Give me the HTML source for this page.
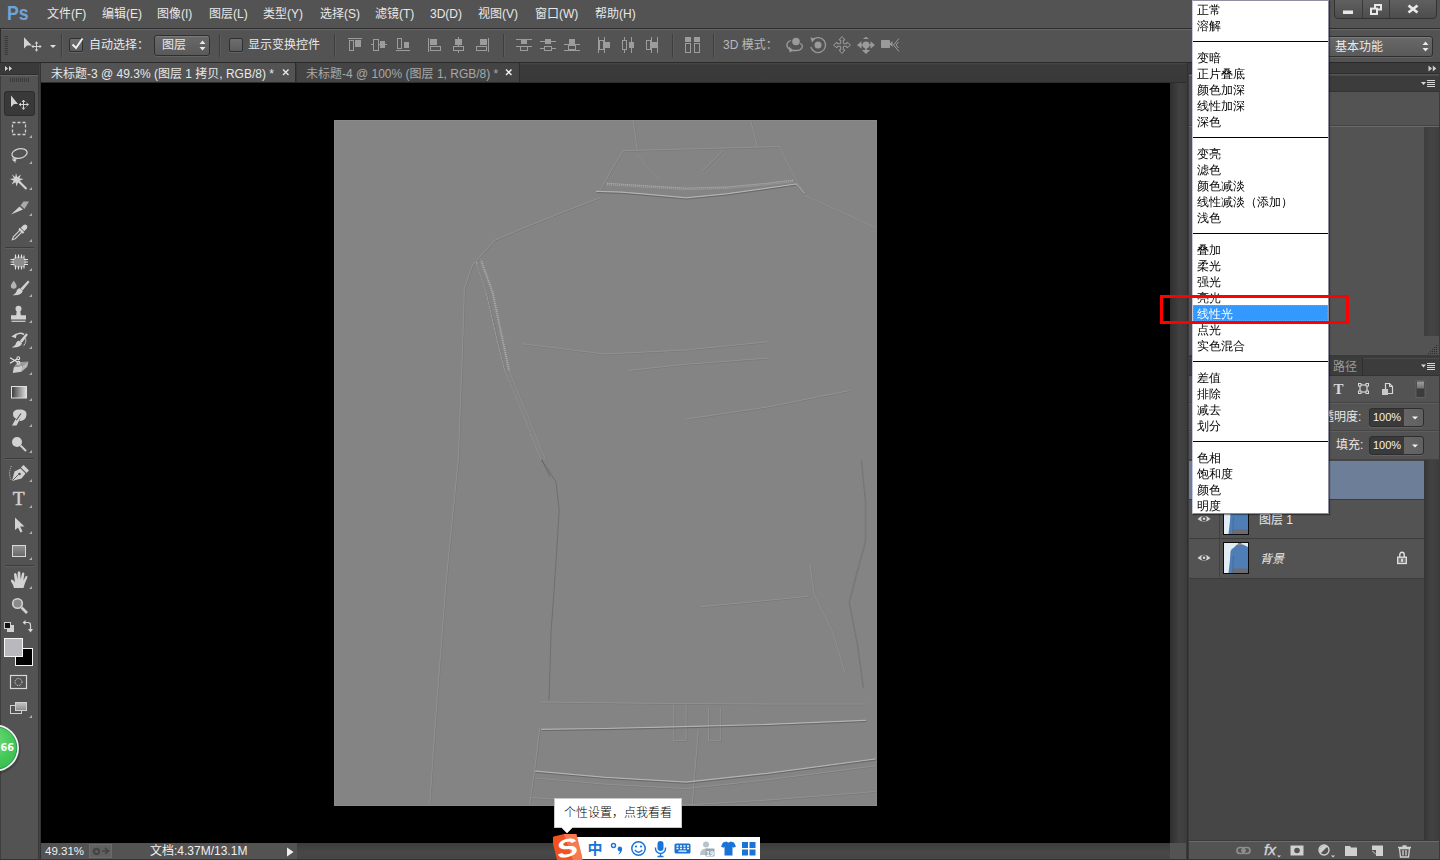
<!DOCTYPE html>
<html lang="zh-CN">
<head>
<meta charset="utf-8">
<title>Photoshop</title>
<style>
*{box-sizing:border-box;margin:0;padding:0}
html,body{width:1440px;height:860px;overflow:hidden;background:#535353}
body{position:relative;font-family:"Liberation Sans","Noto Sans CJK SC",sans-serif;font-size:12px;color:#e6e6e6}
.abs{position:absolute}
#menubar{left:0;top:0;width:1440px;height:28px;background:#535353}
#menubar .mi{position:absolute;top:5px;height:18px;line-height:18px;font-size:12px;color:#e8e8e8;white-space:nowrap}
#ps{position:absolute;left:7px;top:-1px;font-size:21px;font-weight:bold;color:#6ea4d8;line-height:28px;transform:scaleX(.84);transform-origin:0 0}
#optbar{left:0;top:28px;width:1440px;height:35px;background:#535353;border-top:1px solid #2c2c2c;border-bottom:1px solid #2a2a2a;box-shadow:inset 0 1px 0 #666}
#tabbar{left:41px;top:63px;width:1145px;height:20px;background:linear-gradient(#4a4a4a,#3b3b3b 2px,#393939);border-bottom:1px solid #2c2c2c}
.tab{position:absolute;top:0;height:19px;line-height:20px;font-size:12px;white-space:nowrap}
#canvas{left:41px;top:83px;width:1129px;height:760px;background:#000}
#photo{left:334px;top:120px;width:543px;height:686px;background:#848484;box-shadow:inset 0 0 0 1px #8a8a8a}
#vscroll{left:1170px;top:83px;width:16px;height:760px;background:linear-gradient(90deg,#2f2f2f,#424242 60%,#3d3d3d)}
#status{left:41px;top:843px;width:1145px;height:17px;background:#535353;border-bottom:1px solid #333}
#toolbar{left:0;top:63px;width:41px;height:797px;background:#535353}
#rightpanel{left:1189px;top:63px;width:251px;height:797px;background:#535353}

#winbtns{position:absolute;left:1334px;top:0;width:103px;height:19px}
.vsep{position:absolute;top:5px;width:2px;height:23px;border-left:1px solid #3e3e3e;border-right:1px solid #5c5c5c}
.ot{position:absolute;font-size:12px;line-height:16px;white-space:nowrap;color:#e8e8e8}
.sel{position:absolute;border:1px solid #2f2f2f;border-radius:3px;background:linear-gradient(#696969,#595959);box-shadow:0 1px 0 #626262, inset 0 1px 0 #7a7a7a}
.chk{position:absolute;width:14px;height:14px;border:1px solid #2f2f2f;border-radius:2px;background:linear-gradient(#6e6e6e,#5c5c5c);box-shadow:0 1px 0 #626262}

.st{font-size:11px;line-height:16px;color:#f0f0f0;white-space:nowrap}
#ime{left:553px;top:837px;width:207px;height:23px;background:linear-gradient(90deg,transparent 17px,#fff 17px)}
#tip{left:554px;top:798px;width:128px;height:30px;font-weight:300;background:#fff;border:1px solid #c8c8c8;color:#000;font-size:12px;line-height:29px;padding-left:9px;white-space:nowrap}

.lyr{left:0;width:235px;height:39px;border-bottom:1px solid #3c3c3c;background:#535353}
.eyecol{left:0;top:0;width:31px;height:38px;border-right:1px solid #414141}

#dd{left:1192px;top:0px;width:137px;height:514px;background:#fff;border:1px solid #c6c6dc;border-top-color:#9090a0;border-right-color:#8c8c9c;border-bottom-color:#8c8c9c;box-shadow:1px 1px 1px rgba(0,0,0,.4);font-family:"Liberation Sans","WenQuanYi Zen Hei",sans-serif;color:#000}
.di{height:16px;line-height:18px;font-size:12px;padding-left:4px;white-space:nowrap}
.dsep{height:16px;position:relative}
.dsep:after{content:"";position:absolute;left:0;right:0;top:8px;height:1px;background:#000}
.dsel{background:#3399ff;color:#fff;outline:1px dotted #e08a3a;outline-offset:-1px}
</style>
</head>
<body>
<div id="menubar" class="abs">
<div id="ps">Ps</div>
<div class="mi" style="left:47px">文件(F)</div>
<div class="mi" style="left:102px">编辑(E)</div>
<div class="mi" style="left:157px">图像(I)</div>
<div class="mi" style="left:209px">图层(L)</div>
<div class="mi" style="left:263px">类型(Y)</div>
<div class="mi" style="left:320px">选择(S)</div>
<div class="mi" style="left:375px">滤镜(T)</div>
<div class="mi" style="left:430px">3D(D)</div>
<div class="mi" style="left:478px">视图(V)</div>
<div class="mi" style="left:535px">窗口(W)</div>
<div class="mi" style="left:595px">帮助(H)</div>
<div id="winbtns"><svg width="103" height="19" viewBox="0 0 103 19">
<defs><linearGradient id="wb" x1="0" y1="0" x2="0" y2="1"><stop offset="0" stop-color="#616161"/><stop offset="1" stop-color="#4c4c4c"/></linearGradient></defs>
<path d="M0.5,-1V15Q0.5,18.5 4,18.5H99Q102.5,18.5 102.5,15V-1Z" fill="url(#wb)" stroke="#333"/>
<path d="M28.500,0V18M55.500,0V18" stroke="#3a3a3a"/>
<rect x="9" y="10.500" width="10" height="3.500" fill="#e8e8e8"/>
<path d="M41,9V5H47V9.500H44" fill="none" stroke="#e8e8e8" stroke-width="2"/>
<rect x="37" y="8.600" width="6" height="5.400" fill="none" stroke="#e8e8e8" stroke-width="2"/>
<path d="M74.500,5.500L83.500,12.500M83.500,5.500L74.500,12.500" stroke="#e8e8e8" stroke-width="2.800"/>
</svg></div>
</div>
<div id="optbar" class="abs">
<div class="abs" style="left:0;top:0;width:1px;height:33px;background:#2e2e2e"></div>
<svg class="abs" style="left:4px;top:7px" width="5" height="21" viewBox="0 0 5 21"><path d="M0.5,0.5H4M0.5,2.5H4M0.5,4.5H4M0.5,6.5H4M0.5,8.5H4M0.5,10.5H4M0.5,12.5H4M0.5,14.5H4M0.5,16.5H4M0.5,18.5H4" stroke="#3a3a3a"/></svg>
<svg class="abs" style="left:22px;top:8px" width="36" height="16" viewBox="0 0 36 16">
<path d="M2,0.300L2,11.600L5,8.600L9.900,8.600Z" fill="#d4d4d4"/>
<path d="M14.500,5.500V13.500M10.500,9.500H18.500" stroke="#d4d4d4" stroke-width="1" fill="none"/>
<path d="M14.500,4.300L16.300,6.500H12.700ZM14.500,14.700L16.300,12.500H12.700ZM9.300,9.500L11.500,7.700V11.300ZM19.700,9.500L17.500,7.700V11.300Z" fill="#d4d4d4"/>
<path d="M28,8H34L31,11Z" fill="#e0e0e0"/>
</svg>
<div class="vsep" style="left:61px"></div>
<div class="chk" style="left:69px;top:9px"><svg width="16" height="16" viewBox="0 0 16 16" style="position:absolute;left:-1px;top:-3px"><path d="M3.5,8.5L7,12L13.5,2.5" fill="none" stroke="#f0f0f0" stroke-width="2"/></svg></div>
<div class="ot" style="left:89px;top:8px">自动选择：</div>
<div class="sel" style="left:154px;top:6px;width:56px;height:21px"></div>
<div class="ot" style="left:162px;top:8px">图层</div>
<svg class="abs" style="left:199px;top:11px" width="7" height="11" viewBox="0 0 7 11"><path d="M0.5,4L3.5,0.5L6.5,4ZM0.5,7L3.5,10.5L6.5,7Z" fill="#e8e8e8"/></svg>
<div class="vsep" style="left:219px"></div>
<div class="chk" style="left:229px;top:9px"></div>
<div class="ot" style="left:248px;top:8px">显示变换控件</div>
<div class="vsep" style="left:334px"></div>
<div class="vsep" style="left:503px"></div>
<div class="vsep" style="left:672px"></div>
<div class="vsep" style="left:713px"></div>
<div class="ot" style="left:723px;top:8px;color:#b9b9b9">3D 模式：</div>
</div>
<svg id="optic" class="abs" style="left:0;top:0;pointer-events:none" width="1440" height="64" viewBox="0 0 1440 64">
<g fill="#9c9c9c" stroke="none">
<rect x="348" y="38" width="14" height="1"/><rect x="355" y="40" width="6" height="7"/>
<rect x="371" y="44" width="16" height="1"/><rect x="380" y="41" width="5" height="7"/>
<rect x="396" y="50" width="14" height="1"/><rect x="404" y="42" width="5" height="6"/>
<rect x="428" y="38" width="1" height="14"/><rect x="430" y="39" width="7" height="6"/>
<rect x="458" y="37" width="1" height="16"/><rect x="455" y="39" width="7" height="6"/>
<rect x="488" y="38" width="1" height="14"/><rect x="480" y="39" width="7" height="6"/>
<rect x="516" y="39" width="16" height="1"/><rect x="521" y="40" width="6" height="4"/><rect x="516" y="46" width="16" height="1"/>
<rect x="540" y="41" width="16" height="1"/><rect x="545" y="39" width="6" height="5"/><rect x="540" y="48" width="16" height="1"/>
<rect x="564" y="44" width="16" height="1"/><rect x="569" y="39" width="6" height="5"/><rect x="564" y="50" width="16" height="1"/>
<rect x="598" y="37" width="1" height="16"/><rect x="604" y="37" width="1" height="16"/><rect x="605" y="42" width="5" height="6"/>
<rect x="624" y="37" width="1" height="16"/><rect x="631" y="37" width="1" height="16"/><rect x="629" y="42" width="5" height="6"/>
<rect x="651" y="37" width="1" height="16"/><rect x="657" y="37" width="1" height="16"/><rect x="652" y="42" width="5" height="6"/>
<rect x="685" y="37" width="6" height="5"/><rect x="694" y="37" width="6" height="5"/>
</g>
<g fill="#535353" stroke="#9c9c9c" stroke-width="1">
<rect x="349.500" y="40.500" width="4" height="10"/>
<rect x="373.500" y="39.500" width="5" height="11"/>
<rect x="397.500" y="38.500" width="4" height="10"/>
<rect x="430.500" y="46.500" width="10" height="4"/>
<rect x="453.500" y="46.500" width="10" height="4"/>
<rect x="476.500" y="46.500" width="10" height="4"/>
<rect x="520.500" y="46.500" width="7" height="4"/>
<rect x="544.500" y="46.500" width="7" height="4"/>
<rect x="568.500" y="45.500" width="7" height="4"/>
<rect x="599.500" y="40.500" width="4" height="9"/>
<rect x="622.500" y="40.500" width="4" height="9"/>
<rect x="646.500" y="40.500" width="4" height="9"/>
<rect x="685.500" y="43.500" width="5" height="9"/>
<rect x="694.500" y="43.500" width="5" height="9"/>
</g>
<g fill="none" stroke="#9a9a9a" stroke-width="1.3">
<!-- 3D rotate -->
<circle cx="796" cy="41.500" r="3.800" fill="#9a9a9a" stroke="none"/>
<path d="M791,40.500C786,42 785.500,47 790,49.500M800,43.500C804,45 803,50 796,50.500H791"/>
<path d="M789,46.500L793.500,50.500L789.500,52.500Z" fill="#9a9a9a" stroke="none"/>
<!-- roll -->
<circle cx="818" cy="45" r="3.500" fill="#9a9a9a" stroke="none"/>
<path d="M813,39.500A7.500,7.500 0 1 1 810.800,47"/>
<path d="M810.500,37.500L815.500,38.500L812,42.500Z" fill="#9a9a9a" stroke="none"/>
<!-- pan -->
<path d="M842,36.500L845,40H843.300V43.700H847V42L850.500,45L847,48V46.300H843.300V50H845L842,53.500L839,50H840.700V46.300H837V48L833.500,45L837,42V43.700H840.700V40H839Z" stroke-width="1"/>
<!-- slide -->
<circle cx="866" cy="45" r="3.400" fill="#9a9a9a" stroke="none"/>
<path d="M857,45L861.500,41.300V48.700ZM875,45L870.500,41.300V48.700ZM866,54L861.800,50H870.200ZM866,36.800L869.200,39H862.800Z" fill="#9a9a9a" stroke="none"/>
<path d="M861,45H863M869,45H871M866,48H866V50" stroke-width="1.600"/>
<!-- camera -->
<rect x="881" y="40" width="9" height="8" rx="0.800" fill="#9a9a9a" stroke="none"/>
<path d="M889.500,44L892.500,41V47Z" fill="#9a9a9a" stroke="none"/>
<path d="M899,38.500L893.500,45L899,51.500M898.500,42L896,45L898.500,48" stroke-width="1"/>
</g>
</svg>

<div id="toolbar" class="abs">
<div class="abs" style="left:0;top:0;width:38px;height:11px;background:#3a3a3a"></div>
<div class="abs" style="left:38px;top:0;width:3px;height:797px;background:#424242;border-left:1px solid #393939;border-right:1px solid #333"></div>
<div class="abs" style="left:0;top:11px;width:38px;height:1px;background:#2e2e2e"></div>
<div class="abs" style="left:0;top:12px;width:1px;height:785px;background:#3e3e3e"></div>
<div class="abs" style="left:0;top:12px;width:38px;height:1px;background:#666"></div>
<svg class="abs" style="left:0;top:0" width="41" height="797" viewBox="0 63 41 797">
<defs>
<linearGradient id="gr1" x1="0" y1="0" x2="1" y2="0"><stop offset="0" stop-color="#3a3a3a"/><stop offset="1" stop-color="#e0e0e0"/></linearGradient>
<linearGradient id="gr2" x1="0" y1="0" x2="0" y2="1"><stop offset="0" stop-color="#c4c4c4"/><stop offset="1" stop-color="#8a8a8a"/></linearGradient>
<linearGradient id="gr3" x1="0" y1="0" x2="0" y2="1"><stop offset="0" stop-color="#929292"/><stop offset="1" stop-color="#686868"/></linearGradient>
<radialGradient id="grn" cx="0.45" cy="0.35" r="0.7"><stop offset="0" stop-color="#74dc7a"/><stop offset="0.600" stop-color="#48c95a"/><stop offset="1" stop-color="#35bd4e"/></radialGradient>
</defs>
<path d="M5,66L8,68.500L5,71ZM9,66L12,68.500L9,71Z" fill="#d8d8d8"/>
<path d="M10.500,78V82M12.500,78V82M14.500,78V82M16.500,78V82M18.500,78V82M20.500,78V82M22.500,78V82M24.500,78V82M26.500,78V82M28.500,78V82" stroke="#3a3a3a"/>
<rect x="4.500" y="91.500" width="30" height="24" rx="2.500" fill="#393939" stroke="#2c2c2c"/>
<g fill="#d2d2d2" stroke="none">
<!-- move -->
<path d="M11,95.500L11,107L14,104L18,104Z"/>
<!-- tri markers -->
<path d="M32,135V138H29ZM32,161V164H29ZM32,187V190H29ZM32,213V216H29ZM32,239V242H29ZM32,268V271H29ZM32,294V297H29ZM32,320V323H29ZM32,346V349H29ZM32,372V375H29ZM32,398V401H29ZM32,424V427H29ZM32,450V453H29ZM32,479V482H29ZM32,505V508H29ZM32,531V534H29ZM32,557V560H29ZM32,586V589H29ZM32,715V718H29Z" fill="#b0b0b0"/>
</g>
<g fill="none" stroke="#d2d2d2" stroke-width="1">
<path d="M23.500,100V109.500M19,104.500H28.500M22,102L23.500,100.200L25,102M22,107.500L23.500,109.300L25,107.500M21,103L19.200,104.500L21,106M26.500,103L28.300,104.500L26.500,106"/>
<!-- marquee -->
<rect x="12.500" y="122.500" width="13" height="12" stroke-dasharray="3 2" stroke-width="1.300"/>
<!-- lasso -->
<ellipse cx="19.500" cy="153.500" rx="7.700" ry="4.700" stroke-width="1.300" transform="rotate(-12 19.500 153.500)"/>
<path d="M13.500,157.500Q12,160.500 14.500,161Q17,160 15,158.500Q13.500,159 15.500,162.500" stroke-width="1.100"/>
<!-- wand -->
<path d="M19,181.500L26.500,189" stroke-width="2.200"/>
<!-- knife/crop -->
<!-- eyedropper -->
<path d="M12.300,239.700L13.300,236.800L20.300,229.800L22.200,231.700L15.200,238.700Z" fill="#535353" stroke="#d2d2d2" stroke-width="1.100"/>
<!-- separators -->
<path d="M5,247.500H34M5,458.500H34M5,565.500H34" stroke="#3c3c3c"/>
<path d="M5,248.500H34M5,459.500H34M5,566.500H34" stroke="#5e5e5e"/>
</g>
<g fill="#d2d2d2">
<!-- wand star -->
<path d="M16,173L17.300,177.200L21,174.500L19.300,178.300L23.500,179L19.700,180.800L22,184.500L18,182.500L16.500,186.500L15.500,182.300L11.500,184.500L13.700,180.800L10,179L14,178.300L11.800,174.300L15.200,177Z"/>
<!-- knife -->
<path d="M11,214.500L19.500,206.500L23,209.500Z"/>
<path d="M20.500,205.500L23.500,201.500H29L24.500,209Z" fill="#aaa"/>
<!-- eyedropper head -->
<path d="M18.300,229.200L19.800,227.700L24.300,232.200L22.800,233.700Z"/>
<path d="M20.800,227.800L23.300,225.300Q25.300,223.800 26.700,225.300Q28.200,226.800 26.700,228.700L24.200,231.200Z"/>
<!-- heal patch -->
<rect x="12.500" y="256.500" width="13.500" height="11" rx="4.500" fill="#8e8e8e"/>
<path d="M15.500,254.500V258.500M18.500,254.500V258M21.500,254.500V258M24,255.500V258.500M15.500,265.500V269.500M18.500,266V269.500M21.500,266V269.500M24,265.500V268.500M10.500,259.500H14.500M10.500,262H14M10.500,264.500H14.500M24,259.500H28M24.500,262H28M24,264.500H28" stroke="#e4e4e4" stroke-width="1.100" fill="none"/>
<!-- mixer brush -->
<path d="M13.700,280.800Q16.600,284.500 16.600,286A2.900,2.700 0 0 1 10.800,286Q10.800,284.500 13.700,280.800Z" fill="#b4b4b4"/>
<path d="M28,280.500L29.500,282L22.500,290.500L20.500,288.500Z"/>
<path d="M20,288.300L22.700,291Q21,296 12.500,295.200Q16.500,293.500 16.800,290.300Q18.300,288 20,288.300Z"/>
<!-- stamp -->
<circle cx="18.500" cy="308.800" r="3"/>
<path d="M16.800,310.500H20.200L20.800,315.200H26V319.500H11V315.200H16.200Z"/>
<rect x="11.500" y="320.700" width="14" height="1.200"/>
<!-- history brush -->
<path d="M26.200,333.300L27.800,334.800L21.800,343L19.800,341Z"/>
<path d="M19.300,340.800L22,343.500Q20,348 11.500,347.300Q15.500,346 16,343Q17.500,340.500 19.300,340.800Z"/>
<path d="M11.300,336.500L16.500,333.200L16,338.200Z"/>
<path d="M15,335.500Q19.500,331.500 24,334.500" fill="none" stroke="#d2d2d2" stroke-width="1.600"/>
<path d="M25.500,338.500Q26.500,343 23,346" stroke="#e0e0e0" stroke-width="1.200" stroke-dasharray="1 1" fill="none"/>
<!-- bg eraser -->
<path d="M13.800,367.200L22.500,365.800L21.500,371.800L12.800,373Z" fill="#cfcfcf"/>
<path d="M13.800,367.200L17.500,362.300L28.500,361.500L22.500,365.800Z" fill="#9a9a9a"/>
<path d="M22.500,365.800L28.500,361.500L27.200,366.800L21.500,371.800Z" fill="#b8b8b8"/>
<path d="M10,357.800L17,361.800M10,363.200L17,359" stroke="#e0e0e0" stroke-width="1.300" fill="none"/>
<circle cx="18.300" cy="358.200" r="1.400" fill="none" stroke="#e0e0e0" stroke-width="1.100"/><circle cx="18.500" cy="362.800" r="1.400" fill="none" stroke="#e0e0e0" stroke-width="1.100"/>
<!-- gradient -->
<rect x="11.500" y="386.500" width="15" height="11.500" fill="url(#gr1)" stroke="#e0e0e0" stroke-width="1"/>
<!-- smudge -->
<path d="M13,414Q13,409.500 19,409.500Q26.500,409.200 26.500,414Q26.500,419 22.500,420.500L19.500,421.300L20.500,418L16.500,425.500H12L16,418.500Q13,417.500 13,414Z"/>
<path d="M16.300,420.300L21,413.500" stroke="#535353" stroke-width="1.100" fill="none"/>
<!-- dodge -->
<circle cx="17" cy="442" r="5"/>
<path d="M20.500,445.500L26,451" stroke="#d2d2d2" stroke-width="1.900" fill="none"/>
<!-- pen -->
<path d="M23.500,465L29,470.500L26.500,473L21,467.500Z"/>
<path d="M20.500,468.500L25.500,473.500L21.500,478.500L12,481L14.500,471.500Z"/>
<circle cx="19.500" cy="474" r="1.300" fill="#535353"/>
<path d="M12.500,480.500L18.500,474.500" stroke="#535353" stroke-width="0.900" fill="none"/>
<path d="M11.500,466Q8,473 11,480" stroke="#d2d2d2" stroke-width="1" stroke-dasharray="1 1.200" fill="none"/>
<!-- path select arrow -->
<path d="M15,517.500V530L18,527.500L20.500,532.500L22.500,531.500L20.200,526.500H24.500Z"/>
<!-- rectangle -->
<rect x="12.500" y="545.500" width="13" height="11" fill="url(#gr3)" stroke="#d8d8d8" stroke-width="1"/>
<!-- hand -->
<path d="M14,588Q13.500,585 11,581.500Q10.500,579.500 12,579.500Q13.500,580 15,582.500L14,574.500Q14,573 15.200,573Q16.300,573 16.600,574.500L17.500,579.500L17.700,572.800Q17.800,571.300 19,571.300Q20.200,571.300 20.300,572.800L20.600,579.500L22,573.500Q22.300,572.300 23.400,572.500Q24.500,572.800 24.300,574L23.400,580.500L25.500,576.500Q26.200,575.500 27,576Q27.800,576.500 27.300,577.700Q24.500,583.500 23.500,588Z"/>
<!-- zoom -->
<circle cx="17.500" cy="603.500" r="4.800" fill="#8a8a8a" stroke="#d2d2d2" stroke-width="1.600"/>
<path d="M21.500,607.500L27,613" stroke="#d2d2d2" stroke-width="2.600" fill="none"/>
</g>
<!-- T -->
<text x="18.800" y="505" font-family="Liberation Serif,serif" font-size="19.500" fill="#d2d2d2" stroke="#d2d2d2" stroke-width="0.450" text-anchor="middle">T</text>
<!-- mini swatches -->
<rect x="7.500" y="625.500" width="6" height="6" fill="#d0d0d0" stroke="#d0d0d0"/>
<rect x="4.500" y="622.500" width="6" height="6" fill="#111" stroke="#d0d0d0"/>
<path d="M24.500,622.500H28Q30.500,622.500 30.500,625V630" fill="none" stroke="#d8d8d8" stroke-width="1.200"/>
<path d="M25.500,620L22.500,622.500L25.500,625ZM28,629L30.500,632.500L33,629Z" fill="#d8d8d8"/>
<!-- fg/bg -->
<rect x="15.500" y="648.500" width="17" height="17" fill="#000" stroke="#f4f4f4"/>
<rect x="4.500" y="638.500" width="18" height="18" fill="#b9b9bd" stroke="#f4f4f4"/>
<!-- quick mask -->
<rect x="10.500" y="675.500" width="16" height="13" fill="none" stroke="#d8d8d8" stroke-width="1.200"/>
<circle cx="18.500" cy="682" r="3.500" fill="none" stroke="#e8e8e8" stroke-width="1" stroke-dasharray="1 1"/>
<!-- screen mode -->
<rect x="10.500" y="705.500" width="11" height="8" fill="#535353" stroke="#d0d0d0"/>
<rect x="15.500" y="702.500" width="11" height="8" fill="url(#gr2)" stroke="#d0d0d0"/>
<!-- green ball -->
<circle cx="-4" cy="749.500" r="24.500" fill="#222" opacity="0.300"/>
<circle cx="-4.500" cy="748" r="23.500" fill="#f4f4f4"/>
<circle cx="-4.500" cy="748" r="21.300" fill="url(#grn)" stroke="#1f8f4e" stroke-width="0.900"/>
<text x="0.600" y="750.700" font-family="DejaVu Sans,Liberation Sans,sans-serif" font-weight="bold" font-size="9.700" fill="#fff">66</text>
</svg>
</div>
<div id="tabbar" class="abs">
<div class="tab" style="left:0;width:255px;background:#535353;border-right:1px solid #2e2e2e;color:#e8e8e8"><span id="t1" style="position:absolute;left:10px;top:1px">未标题-3 @ 49.3% (图层 1 拷贝, RGB/8) *</span>
<svg style="position:absolute;left:241px;top:5px" width="8" height="8" viewBox="0 0 8 8"><path d="M1,1.500L6.500,7M6.500,1.500L1,7" stroke="#e8e8e8" stroke-width="1.400"/></svg></div>
<div class="tab" style="left:256px;width:223px;background:#444;border-right:1px solid #2e2e2e;color:#a8a8a8"><span id="t2" style="position:absolute;left:9px;top:1px">未标题-4 @ 100% (图层 1, RGB/8) *</span>
<svg style="position:absolute;left:208px;top:5px" width="8" height="8" viewBox="0 0 8 8"><path d="M1,1.500L6.500,7M6.500,1.500L1,7" stroke="#f0f0f0" stroke-width="1.400"/></svg></div>
</div>
<div id="canvas" class="abs"></div>
<div id="photo" class="abs"><svg width="543" height="685" viewBox="334 120 543 685" style="position:absolute;left:0;top:0">
<g fill="none" stroke-linecap="round" stroke-linejoin="round">
<path transform="translate(0.700,0.700)" d="M596.6,191.4 L621.1,192.2 L645.5,194.2 L686.2,197.9 L726.8,193.8 L767.5,188.1 L796.0,184.0 L804.1,193.4 M606.8,183.2 L645.5,185.7 L686.2,188.1 L726.8,186.9 L767.5,183.2 L794.0,180.0 M623.1,150.7 L610.9,171.0 L600.7,189.3 M779.7,146.6 L791.9,171.0 L804.1,193.4 M623.1,150.7 L686.2,149.1 L779.7,146.6 M633.3,120.2 L635.3,134.4 L637.3,150.7 M751.2,122.2 L754.5,134.4 L757.3,146.6 M637.3,154.8 L647.5,167.0 L659.7,179.2 M722.8,150.7 L712.6,160.9 L702.4,171.0 M600.7,197.5 L564.1,211.7 L523.4,228.0 L494.9,240.2 L472.6,264.6 M472.6,264.6 L464.4,289.0 L462.4,354.1 L460.4,407.0 L458.3,459.9 M476.6,262.6 L486.8,293.1 L497.0,337.8 L505.1,370.4 L523.4,415.1 L541.7,459.9 M480.7,258.5 L492.9,293.1 L502.3,337.8 L509.2,370.4 L527.5,415.1 L545.8,459.9 M804.1,195.4 L840.7,211.7 L875.3,228.0 M523.4,343.9 L604.8,354.1 L686.2,350.0 L767.5,341.9 M629.2,370.4 L686.2,364.3 L767.5,358.2 M686.2,419.2 L767.5,407.0 L848.9,390.7 M458.3,460.0 L452.2,521.0 L446.1,582.1 L442.1,634.9 L438.0,687.8 L433.9,744.8 L429.8,803.8 M541.7,702.1 L645.5,703.3 L767.5,704.1 L865.2,704.1 M541.7,729.3 L604.8,728.5 L673.9,726.9 L767.5,724.4 L865.2,720.4 M673.9,704.1 L673.9,740.7 L686.2,740.7 L686.2,704.1 M708.5,708.2 L708.5,740.7 L720.7,740.7 L720.7,708.2 M698.4,730.5 L695.1,769.2 L692.3,805.8 M535.6,771.2 L604.8,777.3 L686.2,782.2 L767.5,773.3 L875.3,759.0 M535.6,778.1 L604.8,784.2 L686.2,788.7 L767.5,779.8 L875.3,765.9 M531.6,797.7 L604.8,802.6 L686.2,805.0 L767.5,800.1 L875.3,791.6 M539.7,728.5 L534.8,769.2 L529.5,805.8 M861.1,460.0 L865.2,500.7 L865.2,541.4 L856.2,573.9 L848.9,602.4 L857.0,643.1 L863.1,687.8 M702.4,606.5 L747.2,602.4 L808.2,596.3 M810.2,565.8 L814.3,594.3 L832.6,630.9 L844.8,671.6" stroke="#6c6c6c" stroke-width="1" opacity="0.450"/>
<path d="M596.6,191.4 L621.1,192.2 L645.5,194.2 L686.2,197.9 L726.8,193.8 L767.5,188.1 L796.0,184.0 L804.1,193.4 M606.8,183.2 L645.5,185.7 L686.2,188.1 L726.8,186.9 L767.5,183.2 L794.0,180.0 M623.1,150.7 L610.9,171.0 L600.7,189.3 M779.7,146.6 L791.9,171.0 L804.1,193.4 M623.1,150.7 L686.2,149.1 L779.7,146.6 M633.3,120.2 L635.3,134.4 L637.3,150.7 M751.2,122.2 L754.5,134.4 L757.3,146.6 M637.3,154.8 L647.5,167.0 L659.7,179.2 M722.8,150.7 L712.6,160.9 L702.4,171.0 M600.7,197.5 L564.1,211.7 L523.4,228.0 L494.9,240.2 L472.6,264.6 M472.6,264.6 L464.4,289.0 L462.4,354.1 L460.4,407.0 L458.3,459.9 M476.6,262.6 L486.8,293.1 L497.0,337.8 L505.1,370.4 L523.4,415.1 L541.7,459.9 M480.7,258.5 L492.9,293.1 L502.3,337.8 L509.2,370.4 L527.5,415.1 L545.8,459.9 M804.1,195.4 L840.7,211.7 L875.3,228.0 M523.4,343.9 L604.8,354.1 L686.2,350.0 L767.5,341.9 M629.2,370.4 L686.2,364.3 L767.5,358.2 M686.2,419.2 L767.5,407.0 L848.9,390.7 M458.3,460.0 L452.2,521.0 L446.1,582.1 L442.1,634.9 L438.0,687.8 L433.9,744.8 L429.8,803.8 M541.7,702.1 L645.5,703.3 L767.5,704.1 L865.2,704.1 M541.7,729.3 L604.8,728.5 L673.9,726.9 L767.5,724.4 L865.2,720.4 M673.9,704.1 L673.9,740.7 L686.2,740.7 L686.2,704.1 M708.5,708.2 L708.5,740.7 L720.7,740.7 L720.7,708.2 M698.4,730.5 L695.1,769.2 L692.3,805.8 M535.6,771.2 L604.8,777.3 L686.2,782.2 L767.5,773.3 L875.3,759.0 M535.6,778.1 L604.8,784.2 L686.2,788.7 L767.5,779.8 L875.3,765.9 M531.6,797.7 L604.8,802.6 L686.2,805.0 L767.5,800.1 L875.3,791.6 M539.7,728.5 L534.8,769.2 L529.5,805.8 M861.1,460.0 L865.2,500.7 L865.2,541.4 L856.2,573.9 L848.9,602.4 L857.0,643.1 L863.1,687.8 M702.4,606.5 L747.2,602.4 L808.2,596.3 M810.2,565.8 L814.3,594.3 L832.6,630.9 L844.8,671.6" stroke="#a4a4a4" stroke-width="1" opacity="0.480"/>
<path d="M596.6,191.4 L621.1,192.2 L645.5,194.2 L686.2,197.9 L726.8,193.8 L767.5,188.1 L796.0,184.0 L804.1,193.4 M476.6,262.6 L486.8,293.1 L497.0,337.8 L505.1,370.4 L523.4,415.1 L541.7,459.9 M541.7,729.3 L604.8,728.5 L673.9,726.9 L767.5,724.4 L865.2,720.4 M535.6,771.2 L604.8,777.3 L686.2,782.2 L767.5,773.3 L875.3,759.0" stroke="#bcbcbc" stroke-width="1.200" opacity="0.800"/>
<path transform="translate(0.500,1.200)" d="M596.6,191.4 L621.1,192.2 L645.5,194.2 L686.2,197.9 L726.8,193.8 L767.5,188.1 L796.0,184.0 L804.1,193.4 M476.6,262.6 L486.8,293.1 L497.0,337.8 L505.1,370.4 L523.4,415.1 L541.7,459.9 M541.7,729.3 L604.8,728.5 L673.9,726.9 L767.5,724.4 L865.2,720.4 M535.6,771.2 L604.8,777.3 L686.2,782.2 L767.5,773.3 L875.3,759.0" stroke="#5a5a5a" stroke-width="1" opacity="0.600"/>
<path d="M606.8,184.0 L645.5,186.5 L686.2,188.9 L726.8,187.7 L767.5,184.0 L794.0,180.8 M481.5,261.3 L492.9,293.1 L502.3,337.8 L509.2,370.4" stroke="#c2c2c2" stroke-width="2.400" stroke-dasharray="1 1" opacity="0.550" stroke-linecap="butt"/>
<path d="M541.7,460.0 L556.0,482.0 L559.2,510.0 L556.0,561.7 L553.5,598.3 L551.1,630.9 L549.0,700.0 M861.1,460.0 L865.2,500.7 L865.2,541.4 L856.2,573.9 L848.9,602.4 L857.0,643.1 L863.1,687.8 M541.7,459.9 L549.9,476.2" stroke="#5c5c5c" stroke-width="1" opacity="0.550"/>
</g></svg></div>
<div id="vscroll" class="abs"></div>
<div id="status" class="abs">
<div class="abs" style="left:0;top:0;width:256px;height:16px;background:#535353"></div>
<div class="abs" style="left:256px;top:0;width:873px;height:16px;background:linear-gradient(#3c3c3c,#484848 60%,#454545)"></div>
<div class="abs st" style="left:4px;top:0px;font-size:11.500px">49.31%</div>
<div class="abs" style="left:48px;top:1px;width:23px;height:14px;background:#616161;border:1px solid #6c6c6c"></div>
<svg class="abs" style="left:51px;top:3px" width="18" height="11" viewBox="0 0 18 11"><circle cx="4.500" cy="5.500" r="2.600" fill="none" stroke="#444" stroke-width="2.200"/><path d="M10,5H16M13,2L16.500,5L13,8" stroke="#444" stroke-width="1.600" fill="none"/></svg>
<div class="abs st" style="left:109px;top:0px;font-size:12px">文档:4.37M/13.1M</div>
<svg class="abs" style="left:245px;top:4px" width="8" height="10" viewBox="0 0 8 10"><path d="M1,0.500L7.500,5L1,9.500Z" fill="#f0f0f0"/></svg>
</div>
<div class="abs" style="left:1186px;top:63px;width:3px;height:797px;background:#2f2f2f;border-left:1px solid #3b3b3b;border-right:1px solid #3b3b3b"></div>
<div id="rightpanel" class="abs">
<div class="abs" style="left:250px;top:0;width:1px;height:797px;background:#3a3a3a;z-index:3"></div>
<div class="abs" style="left:0;top:0;width:251px;height:11px;background:#3b3b3b;border-bottom:1px solid #2e2e2e"></div>
<svg class="abs" style="left:239px;top:2px" width="9" height="7" viewBox="0 0 9 7"><path d="M0.500,0.500L4,3.500L0.500,6.500ZM4.800,0.500L8.300,3.500L4.800,6.500Z" fill="#d0d0d0"/></svg>
<div class="abs" style="left:0;top:12px;width:251px;height:17px;background:#3c3c3c;border-top:1px solid #4a4a4a;border-bottom:1px solid #333"></div>
<div class="abs" style="left:0;top:12px;width:44px;height:17px;background:#535353;border-top:1px solid #6a6a6a;border-right:1px solid #2e2e2e"></div>
<svg class="abs pm" style="left:232px;top:17px" width="16" height="8" viewBox="0 0 16 8"><path d="M0,2H5L2.500,5Z" fill="#d8d8d8"/><path d="M6,0.500H14M6,2.500H14M6,4.500H14M6,6.500H14" stroke="#d8d8d8" stroke-width="1" shape-rendering="crispEdges"/></svg>
<div class="abs" style="left:0;top:63px;width:251px;height:1px;background:#6a6a6a"></div>
<div class="abs" style="left:0;top:62px;width:251px;height:1px;background:#444"></div>
<div class="abs" style="left:235px;top:64px;width:15px;height:209px;background:linear-gradient(90deg,#3e3e3e,#444 50%,#3f3f3f)"></div>
<svg class="abs" style="left:238px;top:281px" width="10" height="10" viewBox="0 0 10 10"><path d="M9.500,0.500V1.500M7.500,2.500V3.500M9.500,2.500V3.500M5.500,4.500V5.500M7.500,4.500V5.500M9.500,4.500V5.500M3.500,6.500V7.500M5.500,6.500V7.500M7.500,6.500V7.500M9.500,6.500V7.500M1.500,8.500V9.500M3.500,8.500V9.500M5.500,8.500V9.500M7.500,8.500V9.500M9.500,8.500V9.500" stroke="#2a2a2a" stroke-width="1" shape-rendering="crispEdges"/></svg>
<div class="abs" style="left:0;top:292px;width:251px;height:3px;background:#3a3a3a"></div>
<div class="abs" style="left:0;top:295px;width:251px;height:17px;background:#3c3c3c;border-top:1px solid #4a4a4a"></div>
<div class="abs" style="left:96px;top:295px;width:78px;height:17px;background:#3c3c3c;border-right:1px solid #2e2e2e;border-left:1px solid #2e2e2e"></div>
<div class="abs" style="left:8px;top:296px;font-size:12px;line-height:16px;color:#f0f0f0">图层</div>
<div class="abs" style="left:104px;top:296px;font-size:12px;line-height:16px;color:#9a9a9a">通道</div>
<div class="abs" style="left:144px;top:296px;font-size:12px;line-height:16px;color:#9a9a9a">路径</div>
<svg class="abs pm" style="left:232px;top:300px" width="16" height="8" viewBox="0 0 16 8"><path d="M0,1.500H5L2.500,4.500Z" fill="#d8d8d8"/><path d="M6,0.500H14M6,2.500H14M6,4.500H14M6,6.500H14" stroke="#d8d8d8" stroke-width="1" shape-rendering="crispEdges"/></svg>
<div class="abs" style="left:0;top:312px;width:251px;height:1px;background:#333"></div>
<div class="abs" style="left:0;top:339px;width:251px;height:1px;background:#444"></div>
<div class="abs" style="left:0;top:340px;width:251px;height:1px;background:#5e5e5e"></div>
<div class="abs" style="left:0;top:367px;width:251px;height:1px;background:#444"></div>
<div class="abs" style="left:0;top:368px;width:251px;height:1px;background:#5e5e5e"></div>
<div class="abs" style="left:0;top:396px;width:251px;height:1px;background:#444"></div>
<!-- filter row icons -->
<svg class="abs" style="left:140px;top:316px" width="100" height="22" viewBox="1329 379 100 22"><defs><linearGradient id="tg" x1="0" y1="0" x2="0" y2="1"><stop offset="0" stop-color="#a0a0a0"/><stop offset="1" stop-color="#707070"/></linearGradient></defs>
<text x="1338.500" y="393.500" font-family="Liberation Serif,serif" font-weight="bold" font-size="15" fill="#d8d8d8" text-anchor="middle">T</text>
<rect x="1360" y="385" width="7" height="7" fill="none" stroke="#d8d8d8" stroke-width="1.200"/>
<g fill="#535353" stroke="#d8d8d8"><rect x="1358.500" y="383.500" width="2.500" height="2.500"/><rect x="1366" y="383.500" width="2.500" height="2.500"/><rect x="1358.500" y="391" width="2.500" height="2.500"/><rect x="1366" y="391" width="2.500" height="2.500"/></g>
<path d="M1385.500,391V383.500H1389.500L1392.500,386.500V393.500H1388" fill="none" stroke="#d8d8d8" stroke-width="1.200"/>
<path d="M1389.500,383.500V386.500H1392.500" fill="none" stroke="#d8d8d8"/>
<rect x="1382" y="389" width="6" height="6" fill="#c8c8c8"/>
<rect x="1416" y="380.500" width="9" height="17" fill="#3c3c3c" stroke="#666" stroke-width="0.800"/>
<rect x="1417" y="381.500" width="7" height="7" fill="url(#tg)"/>
</svg>
<div class="abs ot" style="left:121px;top:346px">不透明度:</div>
<div class="abs" style="left:180px;top:345px;width:55px;height:19px;border:1px solid #2e2e2e;border-radius:3px;background:linear-gradient(90deg,#3a3a3a 0,#3a3a3a 34px,#666 34px,#606060);box-shadow:0 1px 0 #626262"></div>
<div class="abs ot" style="left:184px;top:346px;color:#f4f4f4;font-size:11px">100%</div>
<svg class="abs" style="left:223px;top:353px" width="6" height="4" viewBox="0 0 6 4"><path d="M0,0.500H6L3,3.500Z" fill="#f0f0f0"/></svg>
<div class="abs ot" style="left:147px;top:374px">填充:</div>
<div class="abs" style="left:180px;top:373px;width:55px;height:19px;border:1px solid #2e2e2e;border-radius:3px;background:linear-gradient(90deg,#3a3a3a 0,#3a3a3a 34px,#666 34px,#606060);box-shadow:0 1px 0 #626262"></div>
<div class="abs ot" style="left:184px;top:374px;color:#f4f4f4;font-size:11px">100%</div>
<svg class="abs" style="left:223px;top:381px" width="6" height="4" viewBox="0 0 6 4"><path d="M0,0.500H6L3,3.500Z" fill="#f0f0f0"/></svg>
<!-- layer list -->
<div class="abs" style="left:0;top:397px;width:235px;height:382px;background:#464646"></div>
<div class="abs" style="left:235px;top:397px;width:16px;height:382px;background:linear-gradient(90deg,#353535,#424242 45%,#3d3d3d);border-right:1px solid #383838"></div>
<div class="abs lyr" style="top:398px;background:#6d7e98"><div class="abs ot" style="left:70px;top:11px">图层 1 拷贝</div></div>
<div class="abs lyr" style="top:437px"><div class="abs ot" style="left:70px;top:12px">图层 1</div><div class="abs eyecol"></div></div>
<div class="abs lyr" style="top:476px;height:40px"><div class="abs ot" style="left:71px;top:12px;font-style:italic">背景</div><div class="abs eyecol"></div></div>
<svg class="abs" style="left:0;top:398px" width="251" height="120" viewBox="1189 461 251 120">
<defs><g id="eye"><path d="M-6.500,0Q0,-6.500 6.500,0Q0,5.500 -6.500,0Z" fill="#d6d6d6"/><circle cx="0" cy="-0.300" r="2.700" fill="#535353"/><circle cx="0" cy="-0.300" r="1.300" fill="#d6d6d6"/></g>
<g id="thumb"><rect x="0" y="0" width="26" height="32" fill="#0c0c0c"/><rect x="1" y="1" width="24" height="30" fill="#e3edf4"/>
<path d="M5.500,31L7,18L7.500,9.500Q8,7 11,5.500L14,2.500H20L25,5V31Z" fill="#4f7db5"/>
<path d="M9.500,31L10.500,14" stroke="#3f6aa0" stroke-width="0.800" fill="none"/>
<path d="M10,26.500H25V31H9.500Z" fill="#6b6b72"/><path d="M15,1H18.500V2.800H15Z" fill="#a87858"/></g></defs>
<use href="#eye" x="1204" y="519"/><use href="#eye" x="1204" y="558"/>
<use href="#thumb" x="1223" y="503"/><use href="#thumb" x="1223" y="542"/>
<rect x="1397.700" y="557.200" width="8.600" height="6.300" fill="#777" stroke="#e2e2e2" stroke-width="1.300"/>
<path d="M1399.800,557V554.600A2.200,2.400 0 0 1 1404.200,554.600V557" fill="none" stroke="#e2e2e2" stroke-width="1.400"/>
<rect x="1401.300" y="558.600" width="1.500" height="3.400" fill="#f0f0f0"/>
</svg>
<!-- bottom bar -->
<div class="abs" style="left:0;top:777px;width:251px;height:1px;background:#3a3a3a"></div>
<div class="abs" style="left:0;top:778px;width:251px;height:19px;background:#535353;border-top:1px solid #6c6c6c;border-bottom:1px solid #333"></div>
<svg class="abs" style="left:40px;top:779px" width="200" height="18" viewBox="1229 842 200 18">
<g fill="none" stroke="#8e8e8e" stroke-width="1.700">
<rect x="1237" y="847.500" width="7.500" height="6" rx="3"/><rect x="1242.500" y="847.500" width="7.500" height="6" rx="3"/>
</g><path d="M1241,850.500H1246" stroke="#8e8e8e" stroke-width="1.700"/>
<text x="1264" y="855" font-family="Liberation Sans,sans-serif" font-style="italic" font-size="14" fill="#d4d4d4" stroke="#d4d4d4" stroke-width="0.300" textLength="12" lengthAdjust="spacingAndGlyphs">fx</text>
<path d="M1277,855.500H1281L1279,857.500Z" fill="#d4d4d4"/>
<rect x="1290.500" y="845.500" width="13" height="10" fill="#d0d0d0"/><circle cx="1297" cy="850.500" r="2.800" fill="#535353"/>
<circle cx="1324" cy="850" r="5" fill="none" stroke="#d0d0d0" stroke-width="1.400"/><path d="M1320.500,853.500A5,5 0 0 1 1327.500,846.500Z" fill="#d0d0d0"/>
<path d="M1331,855.500H1335L1333,857.500Z" fill="#d4d4d4"/>
<path d="M1345,846H1350L1351,847.500H1357V856H1345Z" fill="#d0d0d0"/>
<path d="M1372,845.500H1383V856H1376V850H1372Z" fill="#d0d0d0"/>
<path d="M1372.500,851L1376,854.500" stroke="#d0d0d0" fill="none"/>
<path d="M1399.500,848.500L1400.500,857H1408.500L1409.500,848.500Z" fill="none" stroke="#d0d0d0" stroke-width="1.300"/>
<path d="M1398,847.500H1411M1402.500,846H1406.500M1403,850V855.500M1406,850V855.500" stroke="#d0d0d0" stroke-width="1.300" fill="none"/>
</svg>
</div>
<div class="sel abs" style="left:1322px;top:36px;width:111px;height:21px"></div>
<div class="abs ot" style="left:1335px;top:38px;font-size:12px;line-height:18px">基本功能</div>
<svg class="abs" style="left:1422px;top:41px" width="7" height="11" viewBox="0 0 7 11"><path d="M0.500,4L3.500,0.500L6.500,4ZM0.500,7L3.500,10.500L6.500,7Z" fill="#e8e8e8"/></svg>
<div id="dd" class="abs">
<div class="di">正常</div>
<div class="di">溶解</div>
<div class="dsep"></div>
<div class="di">变暗</div>
<div class="di">正片叠底</div>
<div class="di">颜色加深</div>
<div class="di">线性加深</div>
<div class="di">深色</div>
<div class="dsep"></div>
<div class="di">变亮</div>
<div class="di">滤色</div>
<div class="di">颜色减淡</div>
<div class="di">线性减淡（添加）</div>
<div class="di">浅色</div>
<div class="dsep"></div>
<div class="di">叠加</div>
<div class="di">柔光</div>
<div class="di">强光</div>
<div class="di">亮光</div>
<div class="di dsel">线性光</div>
<div class="di">点光</div>
<div class="di">实色混合</div>
<div class="dsep"></div>
<div class="di">差值</div>
<div class="di">排除</div>
<div class="di">减去</div>
<div class="di">划分</div>
<div class="dsep"></div>
<div class="di">色相</div>
<div class="di">饱和度</div>
<div class="di">颜色</div>
<div class="di">明度</div>
</div>
<div class="abs" style="left:1160px;top:295px;width:189px;height:29px;border:3px solid #f00"></div>
<div class="abs" style="left:0;top:859px;width:1440px;height:1px;background:#333"></div>
<div id="ime" class="abs">
<div class="abs" style="left:17px;top:22px;width:190px;height:1px;background:#333"></div>
<svg class="abs" style="left:0;top:-3px" width="207" height="26" viewBox="0 0 207 26">
<g transform="rotate(-14 15 14)"><rect x="1.500" y="-0.500" width="25" height="30" rx="3.500" fill="#f1521f"/>
<path d="M14.500,-0.500H23Q26.500,-0.500 26.500,3V29.500H17Z" fill="#f79a7c" opacity="0.550"/>
<text x="0" y="0" transform="translate(14,22.500) scale(1.280,1)" font-family="Liberation Sans,sans-serif" font-weight="bold" font-style="italic" font-size="25" fill="#fff" text-anchor="middle">S</text></g>
<text x="34.500" y="19.800" font-family="Liberation Sans,Noto Sans CJK SC,sans-serif" font-weight="bold" font-size="15" fill="#1a74d8">中</text>
<circle cx="60.500" cy="11.500" r="2" fill="none" stroke="#1a74d8" stroke-width="1.400"/>
<path d="M64.600,15.200A2.300,2.300 0 1 1 69,15.800Q68.500,19.500 65,20.800Q67,18.800 66.800,17.200Q64.800,17 64.600,15.200Z" fill="#1a74d8"/>
<circle cx="85.500" cy="14.500" r="6.700" fill="none" stroke="#1a74d8" stroke-width="1.500"/>
<circle cx="83" cy="12.500" r="1.100" fill="#1a74d8"/><circle cx="88" cy="12.500" r="1.100" fill="#1a74d8"/>
<path d="M81.800,16Q85.500,20.500 89.200,16" fill="none" stroke="#1a74d8" stroke-width="1.300"/>
<rect x="104.500" y="7" width="6" height="10" rx="3" fill="#1a74d8"/>
<path d="M102.500,13.500V14.500A5,5 0 0 0 112.500,14.500V13.500M107.500,19.500V22.500M104.500,22.500H110.500" fill="none" stroke="#1a74d8" stroke-width="1.400"/>
<rect x="121.500" y="9.500" width="16" height="10" rx="1.500" fill="#1a74d8"/>
<path d="M123.500,12H125.500M127,12H129M130.500,12H132.500M134,12H136M123.500,14.500H125.500M127,14.500H129M130.500,14.500H132.500M134,14.500H136M125.500,17.200H133.500" stroke="#fff" stroke-width="1.300"/>
<circle cx="153" cy="10.500" r="3" fill="#b9c3cc"/><path d="M147,21Q147,14.500 153,14.500Q159,14.500 159,21Z" fill="#b9c3cc"/>
<rect x="152.500" y="14.500" width="9" height="8" rx="1" fill="#9aa6b2"/><text x="157" y="21.500" font-family="Liberation Sans,sans-serif" font-size="7" font-weight="bold" fill="#fff" text-anchor="middle">19</text>
<path d="M170,8.500L173.500,7.500Q175.500,9.500 177.500,7.500L181,8.500L183,12.500L180.500,13.800L179.500,12.800V21.500H171.500V12.800L170.500,13.800L168,12.500Z" fill="#1a74d8"/>
<rect x="189" y="8" width="6" height="6" fill="#1a74d8"/><rect x="196.500" y="8" width="6" height="6" fill="#1a74d8"/><rect x="189" y="15.500" width="6" height="6" fill="#1a74d8"/><rect x="196.500" y="15.500" width="6" height="6" fill="#1a74d8"/>
</svg></div>
<div id="tip" class="abs">个性设置，点我看看</div>
<svg class="abs" style="left:561px;top:827px" width="12" height="7" viewBox="0 0 12 7"><path d="M0.500,0L6,6L11.500,0Z" fill="#fff"/><path d="M0.500,0.500L6,6L11.500,0.500" fill="none" stroke="#c8c8c8"/></svg>

</body>
</html>
